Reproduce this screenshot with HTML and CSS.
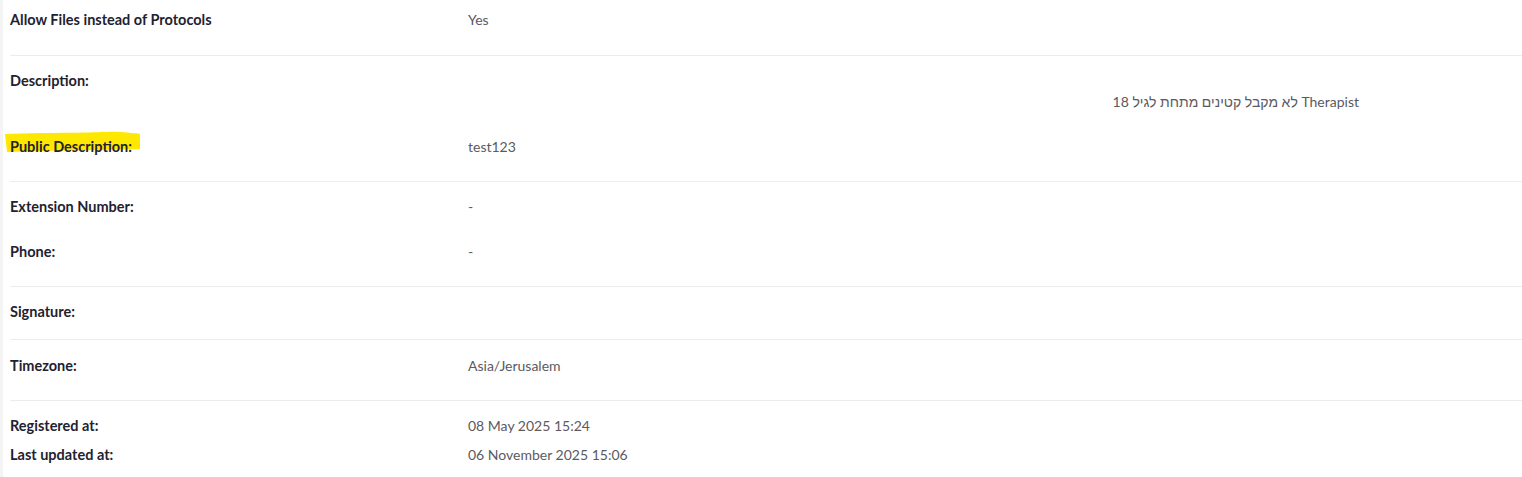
FILE: index.html
```html
<!DOCTYPE html>
<html lang="en">
<head>
<meta charset="utf-8">
<title>Details</title>
<link rel="stylesheet" href="styles.css">
</head>
<body>
<div class="panel">
  <div class="group group--first">
    <div class="row"><div class="label">Allow Files instead of Protocols</div><div class="value">Yes</div></div>
  </div>
  <div class="group">
    <div class="row"><div class="label">Description:</div><div class="value"><p class="rtl" dir="rtl">Therapist לא מקבל קטינים מתחת לגיל 18</p></div></div>
    <div class="row"><div class="label"><span class="marked"><svg class="marker" viewBox="0 0 135 21" preserveAspectRatio="none" aria-hidden="true"><path d="M0 3 C20 2 50 2 80 1.5 C100 1 112 0 122 1.5 C128 2.5 133 2 135 3 L135 18 C100 19 50 19.5 2 21 Z"/></svg><span class="marked-text">Public Description:</span></span></div><div class="value">test123</div></div>
  </div>
  <div class="group">
    <div class="row"><div class="label">Extension Number:</div><div class="value">-</div></div>
    <div class="row"><div class="label">Phone:</div><div class="value">-</div></div>
  </div>
  <div class="group group--short">
    <div class="row"><div class="label">Signature:</div><div class="value"></div></div>
  </div>
  <div class="group group--loose">
    <div class="row"><div class="label">Timezone:</div><div class="value">Asia/Jerusalem</div></div>
  </div>
  <div class="group group--dates">
    <div class="row"><div class="label">Registered at:</div><div class="value">08 May 2025 15:24</div></div>
    <div class="row"><div class="label">Last updated at:</div><div class="value">06 November 2025 15:06</div></div>
  </div>
</div>
</body>
</html>
```
FILE: styles.css
```css
html, body {
  margin: 0;
  padding: 0;
}
body {
  background: #f4f4f5;
  font-family: Lato, "Liberation Sans", sans-serif;
  font-size: 14px;
  line-height: 20px;
}
.panel {
  margin-left: 3px;
  padding-left: 7px;
  background: #ffffff;
  min-height: 477px;
}
.group {
  display: flex;
  flex-direction: column;
  gap: 25px;
  padding: 15px 0 24px;
  border-bottom: 1px solid #ececec;
}
.group--first {
  padding-top: 10px;
  padding-bottom: 25px;
}
.group--short {
  padding-bottom: 17px;
}
.group--loose {
  padding-top: 16px;
}
.group--dates {
  gap: 9px;
  border-bottom: none;
}
.row {
  display: grid;
  grid-template-columns: 458px 891px;
}
.label {
  font-weight: 700;
  font-size: 14.5px;
  color: #1f2230;
}
.value {
  color: #5a5a61;
  font-weight: 400;
}
.rtl {
  margin: 21px 0 0;
  text-align: right;
}
.marked {
  position: relative;
  display: inline-block;
}
.marker {
  position: absolute;
  left: -5px;
  top: -6px;
  width: 135px;
  height: 21px;
  fill: #ffe800;
}
.marked-text {
  position: relative;
}
```
